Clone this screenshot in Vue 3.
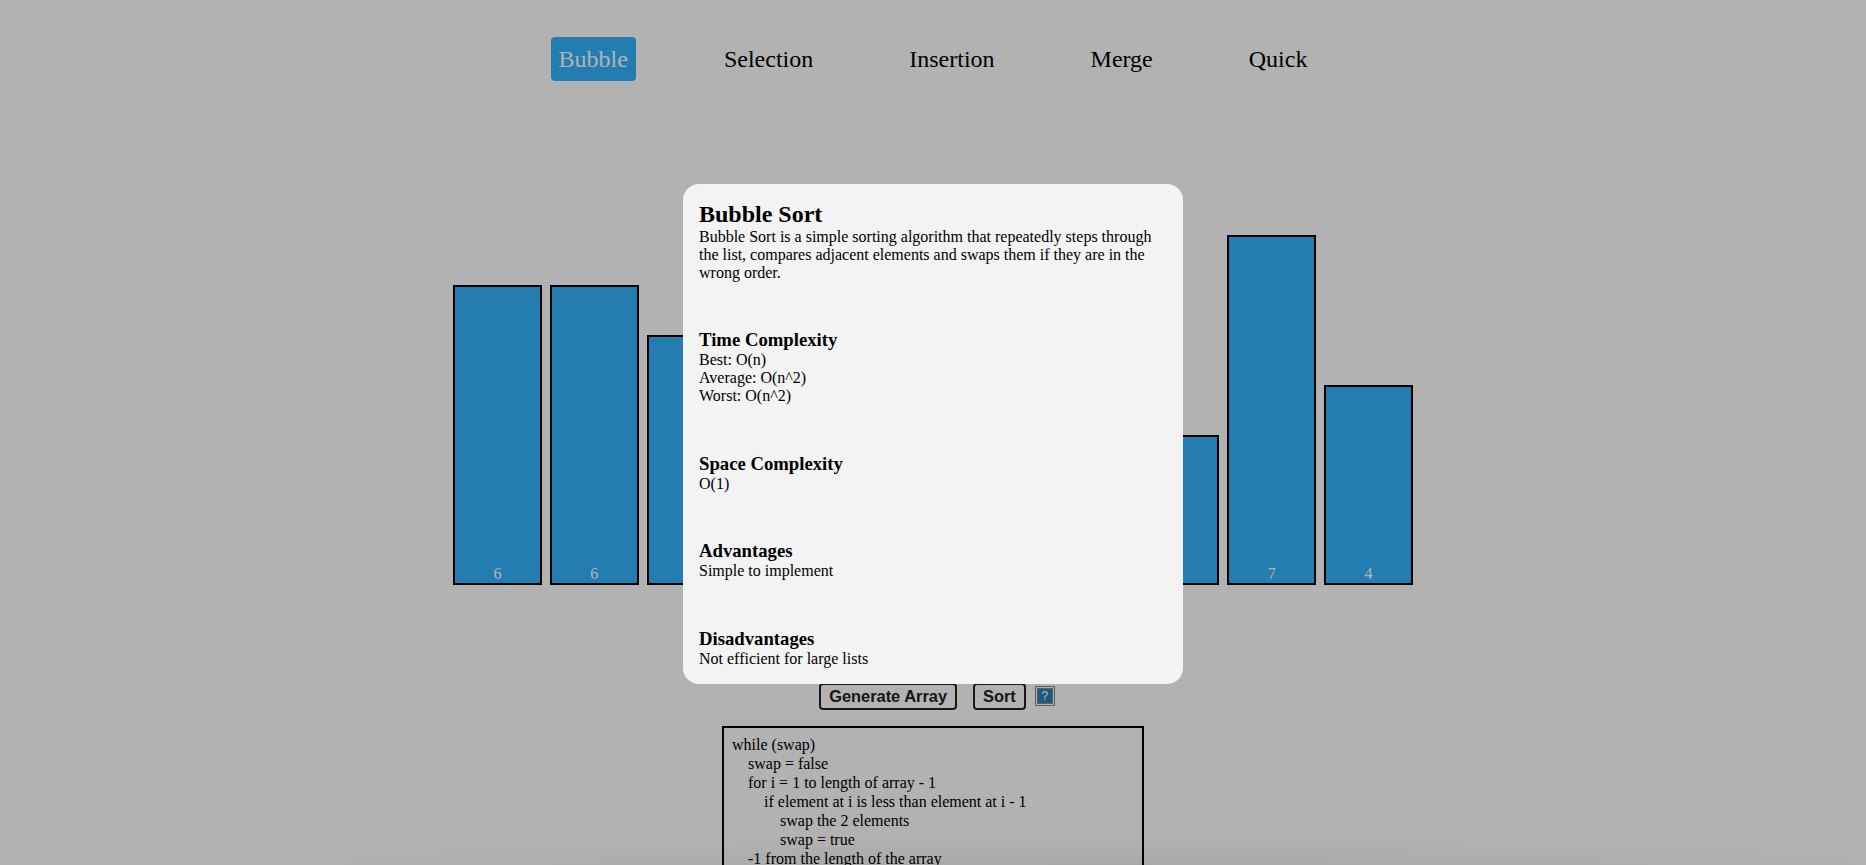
<script setup>
import { ref } from 'vue';

const algorithms = ['Bubble', 'Selection', 'Insertion', 'Merge', 'Quick'];
const active = ref('Bubble');
const bars = [6, 6, 5, 4, 2, 5, 6, 3, 7, 4];

const code = `while (swap)
    swap = false
    for i = 1 to length of array - 1
        if element at i is less than element at i - 1
            swap the 2 elements
            swap = true
    -1 from the length of the array
`;
</script>

<template>
    <div class="page">
        <nav class="nav">
            <a
                v-for="name in algorithms"
                :key="name"
                class="nav-item"
                :class="{ active: active === name }"
                @click="active = name"
            >{{ name }}</a>
        </nav>

        <div class="chart">
            <div
                v-for="(value, index) in bars"
                :key="index"
                class="bar"
                :style="{ height: value * 50 + 'px' }"
            >{{ value }}</div>
        </div>

        <div class="controls">
            <button class="btn">Generate Array</button>
            <button class="btn">Sort</button>
            <span class="help"><span class="help-inner">?</span></span>
        </div>

        <pre class="code">{{ code }}</pre>

        <div class="overlay"></div>

        <div class="modal">
            <h2>Bubble Sort</h2>
            <p>Bubble Sort is a simple sorting algorithm that repeatedly steps through the list, compares adjacent elements and swaps them if they are in the wrong order.</p>
            <section>
                <h3>Time Complexity</h3>
                <p>Best: O(n)<br />Average: O(n^2)<br />Worst: O(n^2)</p>
            </section>
            <section>
                <h3>Space Complexity</h3>
                <p>O(1)</p>
            </section>
            <section>
                <h3>Advantages</h3>
                <p>Simple to implement</p>
            </section>
            <section>
                <h3>Disadvantages</h3>
                <p>Not efficient for large lists</p>
            </section>
        </div>
    </div>
</template>

<style>
html,
body {
    overflow: hidden;
    background: #fff;
}
</style>

<style scoped>
.page {
    height: 865px;
    overflow: hidden;
    font-family: 'Liberation Serif', 'Times New Roman', serif;
    font-size: 16px;
    color: #000;
}

.nav {
    display: flex;
    justify-content: center;
    gap: 80px;
    padding-top: 37px;
}
.nav-item {
    padding: 9px 8px 8px;
    font-size: 24px;
    border-radius: 4px;
    cursor: pointer;
}
.nav-item.active {
    background: #34b3fc;
    color: #fff;
}

.chart {
    display: flex;
    align-items: flex-end;
    gap: 8px;
    width: 960px;
    height: 350px;
    margin: 154px auto 0;
}
.bar {
    flex: 1;
    box-sizing: border-box;
    display: flex;
    align-items: flex-end;
    justify-content: center;
    background: #34b3fc;
    border: 2px solid #000;
    color: #fff;
}

.controls {
    display: flex;
    align-items: flex-start;
    justify-content: center;
    height: 27px;
    margin-top: 98px;
    padding-left: 8px;
}
.btn {
    box-sizing: border-box;
    height: 27px;
    padding: 2px 8px 3px;
    margin-right: 16px;
    font-family: 'Liberation Sans', Arial, sans-serif;
    font-size: 16.4px;
    font-weight: 700;
    color: #222;
    background: transparent;
    border: 2px solid #222;
    border-radius: 4px;
}
.btn + .btn {
    margin-right: 9px;
}
.help {
    box-sizing: border-box;
    width: 20px;
    height: 20px;
    margin-top: 3px;
    padding: 1px;
    border: 1px solid #888;
}
.help-inner {
    box-sizing: border-box;
    display: block;
    width: 16px;
    height: 16px;
    border: 1px solid #888;
    background: #2d7fb8;
    color: #fff;
    font-family: 'Liberation Sans', Arial, sans-serif;
    font-size: 12px;
    line-height: 14px;
    text-align: center;
}

.code {
    box-sizing: border-box;
    width: 422px;
    height: 220px;
    margin: 16px auto 0;
    padding: 7px 8px 8px;
    border: 2px solid #000;
    font-family: inherit;
    font-size: 16px;
    line-height: 19px;
}

.overlay {
    position: fixed;
    inset: 0;
    background:
        radial-gradient(ellipse 900px 28px at 1100px 100%, rgba(0, 0, 0, 0.05), transparent),
        rgba(0, 0, 0, 0.3);
}

.modal {
    position: fixed;
    top: 184px;
    left: calc(50% - 250px);
    box-sizing: border-box;
    width: 500px;
    height: 500px;
    padding: 17px 16px 16px;
    background: #f3f3f3;
    border-radius: 16px;
}
.modal h2 {
    margin: 0;
    font-size: 24px;
}
.modal h3 {
    margin: 0;
    font-size: 18.72px;
}
.modal p {
    margin: 0;
}
.modal section {
    margin-top: 48px;
}
.modal section:nth-of-type(1),
.modal section:nth-of-type(3) {
    margin-top: 47px;
}
</style>
